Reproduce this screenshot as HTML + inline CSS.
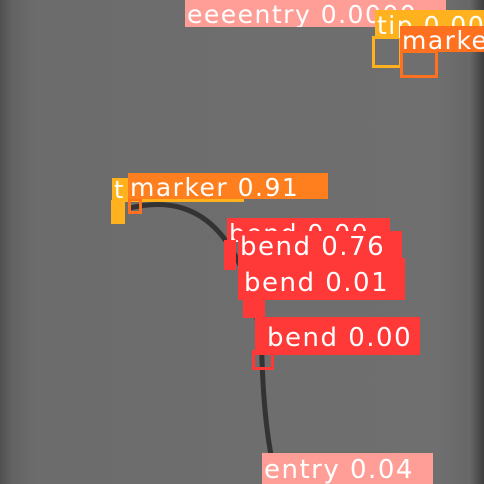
<!DOCTYPE html>
<html><head><style>
body{margin:0;width:484px;height:484px;overflow:hidden;position:relative;font-family:"DejaVu Sans","Liberation Sans",sans-serif;
background:linear-gradient(90deg,#505050 0,#626262 12px,#6c6c6c 35px,#6f6f6f 440px,#676767 470px,#3e3e3e 484px);}
.l{position:absolute;color:#fff;white-space:nowrap;line-height:1;padding-left:2px;box-sizing:border-box;letter-spacing:1.5px;overflow:hidden}
.b{position:absolute;box-sizing:border-box;border:3px solid}
</style></head><body>
<svg width="484" height="484" style="position:absolute;left:0;top:0">
<path d="M130,208 Q205,190 240,265 Q262,320 262,360 Q264,420 272,460" stroke="#333" stroke-width="5" fill="none"/>
</svg>
<div class="l" style="left:185px;top:0;width:261px;height:27px;background:#ff9d97;font-size:25px;padding-top:2px">eeeentry 0.0000</div>
<div class="b" style="left:372px;top:36px;width:30px;height:32px;border-color:#ffb21d"></div>
<div class="l" style="left:375px;top:10px;width:109px;height:28px;background:#ffb21d;font-size:25px;padding-top:3px">tip 0.00</div>
<div class="b" style="left:400px;top:50px;width:38px;height:28px;border-color:#ff701f"></div>
<div class="l" style="left:400px;top:26px;width:84px;height:26px;background:#ff701f;font-size:25px;padding-top:2px">marker</div>
<div class="l" style="left:112px;top:178px;width:132px;height:24px;background:#ffb21d;font-size:24px">t</div>
<div style="position:absolute;left:111px;top:200px;width:14px;height:24px;background:#ffb21d"></div>
<div class="b" style="left:128px;top:198px;width:14px;height:16px;border-color:#ff701f"></div>
<div class="l" style="left:128px;top:173px;width:200px;height:26px;background:#ff7f1f;font-size:25px;padding-top:2px">marker 0.91</div>
<div class="l" style="left:227px;top:218px;width:163px;height:24px;background:#ff3838;font-size:25px;padding-top:3px">bend 0.00</div>
<div style="position:absolute;left:224px;top:240px;width:12px;height:30px;background:#ff3838"></div>
<div class="l" style="left:238px;top:231px;width:164px;height:30px;background:#ff3838;font-size:26px;padding-top:3px">bend 0.76</div>
<div class="l" style="left:238px;top:258px;width:167px;height:42px;background:#ff3838;font-size:26px;padding-top:12px;padding-left:6px">bend 0.01</div>
<div style="position:absolute;left:243px;top:300px;width:22px;height:18px;background:#ff3838"></div>
<div class="l" style="left:255px;top:317px;width:165px;height:38px;background:#ff3838;font-size:26px;padding-top:8px;padding-left:12px">bend 0.00</div>
<div class="b" style="left:252px;top:350px;width:22px;height:20px;border-color:#ff3838"></div>
<div class="l" style="left:262px;top:453px;width:171px;height:31px;background:#ff9d97;font-size:26px;padding-top:4px">entry 0.04</div>
</body></html>
